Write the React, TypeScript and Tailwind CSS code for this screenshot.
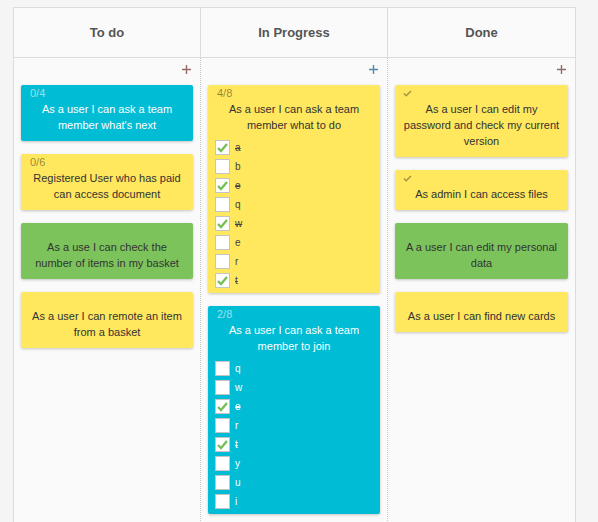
import { clsx } from "clsx";

type Item = { label: string; done: boolean };
type Card = {
  title: string;
  color: "cyan" | "yellow" | "green";
  counter?: string;
  check?: boolean;
  items?: Item[];
};

const CARD_BG: Record<Card["color"], string> = {
  cyan: "bg-[#00bcd4] text-white",
  yellow: "bg-[#ffe75e] text-[#333]",
  green: "bg-[#7cc35c] text-[#333]",
};

const COUNTER: Record<Card["color"], string> = {
  cyan: "text-white/60",
  yellow: "text-black/45",
  green: "text-black/45",
};

const list = (s: string, done: number[]) =>
  s.split("").map((c, i) => ({ label: c, done: done.includes(i) }));

const COLUMNS: { name: string; plus: string; cards: Card[] }[] = [
  {
    name: "To do",
    plus: "text-[#9a6b66]",
    cards: [
      { title: "As a user I can ask a team member what's next", color: "cyan", counter: "0/4" },
      { title: "Registered User who has paid can access document", color: "yellow", counter: "0/6" },
      { title: "As a use I can check the number of items in my basket", color: "green" },
      { title: "As a user I can remote an item from a basket", color: "yellow" },
    ],
  },
  {
    name: "In Progress",
    plus: "text-[#4f8aa6]",
    cards: [
      {
        title: "As a user I can ask a team member what to do",
        color: "yellow",
        counter: "4/8",
        items: list("abeqwert", [0, 2, 4, 7]),
      },
      {
        title: "As a user I can ask a team member to join",
        color: "cyan",
        counter: "2/8",
        items: list("qwertyui", [2, 4]),
      },
    ],
  },
  {
    name: "Done",
    plus: "text-[#8f6d6d]",
    cards: [
      { title: "As a user I can edit my password and check my current version", color: "yellow", check: true },
      { title: "As admin I can access files", color: "yellow", check: true },
      { title: "A a user I can edit my personal data", color: "green" },
      { title: "As a user I can find new cards", color: "yellow" },
    ],
  },
];

function Plus({ className }: { className: string }) {
  return (
    <svg width="9" height="9" viewBox="0 0 9 9" className={className}>
      <path d="M4.5 0v9M0 4.5h9" stroke="currentColor" strokeWidth="1.4" />
    </svg>
  );
}

function CheckBox({ item, color }: { item: Item; color: Card["color"] }) {
  return (
    <div className="flex items-center gap-[5px] h-[15px]">
      <div className="w-[15px] h-[15px] bg-white border border-[#c4c4c4] flex items-center justify-center shrink-0">
        {item.done && (
          <svg width="13" height="13" viewBox="0 0 13 13">
            <path d="M2 7l3 3 6-7" fill="none" stroke="#74bf55" strokeWidth="2.3" />
          </svg>
        )}
      </div>
      <span
        className={clsx(
          "text-[10px] leading-none",
          color === "cyan" ? "text-white" : "text-[#444]",
          item.done && "line-through"
        )}
      >
        {item.label}
      </span>
    </div>
  );
}

function StoryCard({ card }: { card: Card }) {
  return (
    <div
      className={clsx(
        "rounded-[2px] shadow-[0_1px_3px_rgba(0,0,0,0.22)]",
        CARD_BG[card.color],
        card.items ? "pb-[5px]" : "pb-[8px]"
      )}
    >
      <div className="h-[16px] pl-[9px] flex items-center">
        {card.counter && (
          <span className={clsx("text-[11px] leading-none", COUNTER[card.color])}>{card.counter}</span>
        )}
        {card.check && (
          <svg width="9" height="7" viewBox="0 0 9 7" className="-ml-[1px]">
            <path d="M1 3.5l2.2 2.2L8 1" fill="none" stroke="rgba(0,0,0,0.35)" strokeWidth="1.6" />
          </svg>
        )}
      </div>
      <p className="text-[11px] leading-[16px] text-center px-[8px]">{card.title}</p>
      {card.items && (
        <div className="flex flex-col gap-[4px] pl-[7px] pt-[7px]">
          {card.items.map((it, i) => (
            <CheckBox key={i} item={it} color={card.color} />
          ))}
        </div>
      )}
    </div>
  );
}

export default function App() {
  return (
    <div
      className="h-screen overflow-hidden bg-[#f5f5f5] pt-[7px] pl-[13px]"
      style={{ fontFamily: '"Liberation Sans", Arial, sans-serif' }}
    >
      <div className="w-[563px] h-[560px] bg-[#fafafa] border-t border-x border-[#dcdcdc] flex flex-col">
        <div className="grid grid-cols-[186px_187px_188px] h-[50px] border-b border-[#dcdcdc]">
          {COLUMNS.map((col, i) => (
            <div
              key={col.name}
              className={clsx(
                "flex items-center justify-center text-[13px] font-bold text-[#555]",
                i > 0 && "border-l border-[#dcdcdc]"
              )}
            >
              {col.name}
            </div>
          ))}
        </div>
        <div className="grid grid-cols-[186px_187px_188px] flex-1">
          {COLUMNS.map((col, i) => (
            <div
              key={col.name}
              className={clsx("px-[7px]", i > 0 && "border-l border-dotted border-[#c8c8c8]")}
            >
              <div className="h-[22px] flex items-center justify-end pr-[2px]">
                <Plus className={col.plus} />
              </div>
              <div className="flex flex-col gap-[13px] pt-[5px]">
                {col.cards.map((c, j) => (
                  <StoryCard key={j} card={c} />
                ))}
              </div>
            </div>
          ))}
        </div>
      </div>
    </div>
  );
}
